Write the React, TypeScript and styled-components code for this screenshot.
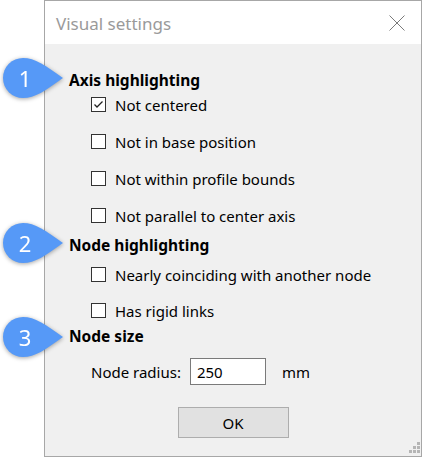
import React from "react";
import styled, { createGlobalStyle } from "styled-components";

const GlobalStyle = createGlobalStyle`
  html, body {
    margin: 0;
    padding: 0;
    background: #ffffff;
  }

  body {
    font-family: "Noto Sans", "Open Sans", sans-serif;
  }
`;

const Page = styled.div`
  position: relative;
  width: 423px;
  height: 457px;
  display: flex;
  overflow: hidden;
`;

const Dialog = styled.div`
  position: relative;
  box-sizing: border-box;
  width: 378px;
  height: 457px;
  margin-left: 44px;
  border: 1px solid #a7a7a7;
  display: flex;
  flex-direction: column;
  background: #f0f0f0;
`;

const TitleBar = styled.div`
  height: 43px;
  flex: none;
  background: #ffffff;
  display: flex;
  align-items: center;
  justify-content: space-between;
  padding: 0 16px 0 11px;
`;

const Title = styled.div`
  font-size: 17px;
  color: #9a9a9a;
  line-height: 20px;
  margin-top: 2px;
`;

const CloseButton = styled.div`
  width: 16px;
  height: 16px;
  display: flex;
`;

const Body = styled.div`
  flex: 1;
  display: flex;
  flex-direction: column;
  padding: 26px 0 0 24px;
`;

const Heading = styled.div<{ $top?: number }>`
  height: 20px;
  line-height: 20px;
  margin-top: ${(p) => p.$top ?? 0}px;
  font-size: 15.5px;
  font-weight: 700;
  color: #000;
`;

const Options = styled.div<{ $top: number; $gap: number }>`
  display: flex;
  flex-direction: column;
  gap: ${(p) => p.$gap}px;
  margin-top: ${(p) => p.$top}px;
  padding-left: 22px;
`;

const Row = styled.label`
  height: 20px;
  display: flex;
  align-items: center;
  gap: 9px;
  font-size: 15px;
  line-height: 20px;
  color: #000;
`;

const RowText = styled.span`
  padding-top: 2px;
`;

const Box = styled.span`
  box-sizing: border-box;
  width: 15px;
  height: 15px;
  border: 1px solid #333;
  background: #fff;
  display: flex;
  align-items: center;
  justify-content: center;
  flex: none;
`;

const FieldRow = styled.div`
  display: flex;
  align-items: center;
  margin-top: 12px;
  padding-left: 22px;
  font-size: 15px;
  color: #000;
`;

const Input = styled.input`
  box-sizing: border-box;
  width: 76px;
  height: 27px;
  margin: 0 16px 0 9px;
  padding: 0 6px;
  border: 1px solid #7a7a7a;
  background: #fff;
  font-family: inherit;
  font-size: 15px;
  color: #000;
  outline: none;
`;

const Footer = styled.div`
  display: flex;
  justify-content: center;
  margin: 22px 0 0 -24px;
`;

const OkButton = styled.button`
  box-sizing: border-box;
  width: 111px;
  height: 31px;
  border: 1px solid #adadad;
  background: #e1e1e1;
  font-family: inherit;
  font-size: 15px;
  color: #000;
  padding: 0;
`;

const Grip = styled.svg`
  position: absolute;
  right: 1px;
  bottom: 2px;
`;

const Callout = styled.div<{ $top: number }>`
  position: absolute;
  left: 0;
  top: ${(p) => p.$top}px;
  width: 66px;
  height: 46px;
  filter: drop-shadow(0 1px 2px rgba(0, 0, 0, 0.35));
`;

const CalloutNumber = styled.span`
  position: absolute;
  left: 3px;
  top: 3px;
  width: 44px;
  height: 40px;
  display: flex;
  align-items: center;
  justify-content: center;
  color: #fff;
  font-size: 22px;
  line-height: 1;
`;

const Check = ({ checked }: { checked?: boolean }) => (
  <Box>
    {checked && (
      <svg width="13" height="13" viewBox="0 0 13 13">
        <polyline points="2.5,6.5 5,9 10.5,3.5" fill="none" stroke="#222" strokeWidth="1.3" />
      </svg>
    )}
  </Box>
);

const Option = ({ label, checked }: { label: string; checked?: boolean }) => (
  <Row>
    <Check checked={checked} />
    <RowText>{label}</RowText>
  </Row>
);

const Bubble = ({ n, top }: { n: number; top: number }) => (
  <Callout $top={top}>
    <svg width="66" height="46" viewBox="0 0 66 46">
      <path
        d="M23 3 C35 3 45 10 63 23 C45 36 35 43 23 43 A20 20 0 0 1 23 3 Z"
        fill="#5699f7"
      />
    </svg>
    <CalloutNumber>{n}</CalloutNumber>
  </Callout>
);

export default function App() {
  return (
    <>
      <GlobalStyle />
      <Page>
        <Dialog>
          <TitleBar>
            <Title>Visual settings</Title>
            <CloseButton>
              <svg width="16" height="16" viewBox="0 0 16 16">
                <path d="M0.5 0.5 L15.5 15.5 M15.5 0.5 L0.5 15.5" stroke="#7a7a7a" strokeWidth="1" />
              </svg>
            </CloseButton>
          </TitleBar>
          <Body>
            <Heading>Axis highlighting</Heading>
            <Options $top={4} $gap={17}>
              <Option label="Not centered" checked />
              <Option label="Not in base position" />
              <Option label="Not within profile bounds" />
              <Option label="Not parallel to center axis" />
            </Options>
            <Heading $top={10}>Node highlighting</Heading>
            <Options $top={9} $gap={16}>
              <Option label="Nearly coinciding with another node" />
              <Option label="Has rigid links" />
            </Options>
            <Heading $top={6}>Node size</Heading>
            <FieldRow>
              Node radius:
              <Input defaultValue="250" readOnly />
              mm
            </FieldRow>
            <Footer>
              <OkButton>OK</OkButton>
            </Footer>
          </Body>
          <Grip width="12" height="12" viewBox="0 0 12 12">
            <g fill="#b5b5b5">
              <rect x="9" y="0" width="3" height="3" />
              <rect x="5" y="4" width="3" height="3" />
              <rect x="9" y="4" width="3" height="3" />
              <rect x="1" y="8" width="3" height="3" />
              <rect x="5" y="8" width="3" height="3" />
              <rect x="9" y="8" width="3" height="3" />
            </g>
          </Grip>
        </Dialog>
        <Bubble n={1} top={55} />
        <Bubble n={2} top={220} />
        <Bubble n={3} top={314} />
      </Page>
    </>
  );
}
